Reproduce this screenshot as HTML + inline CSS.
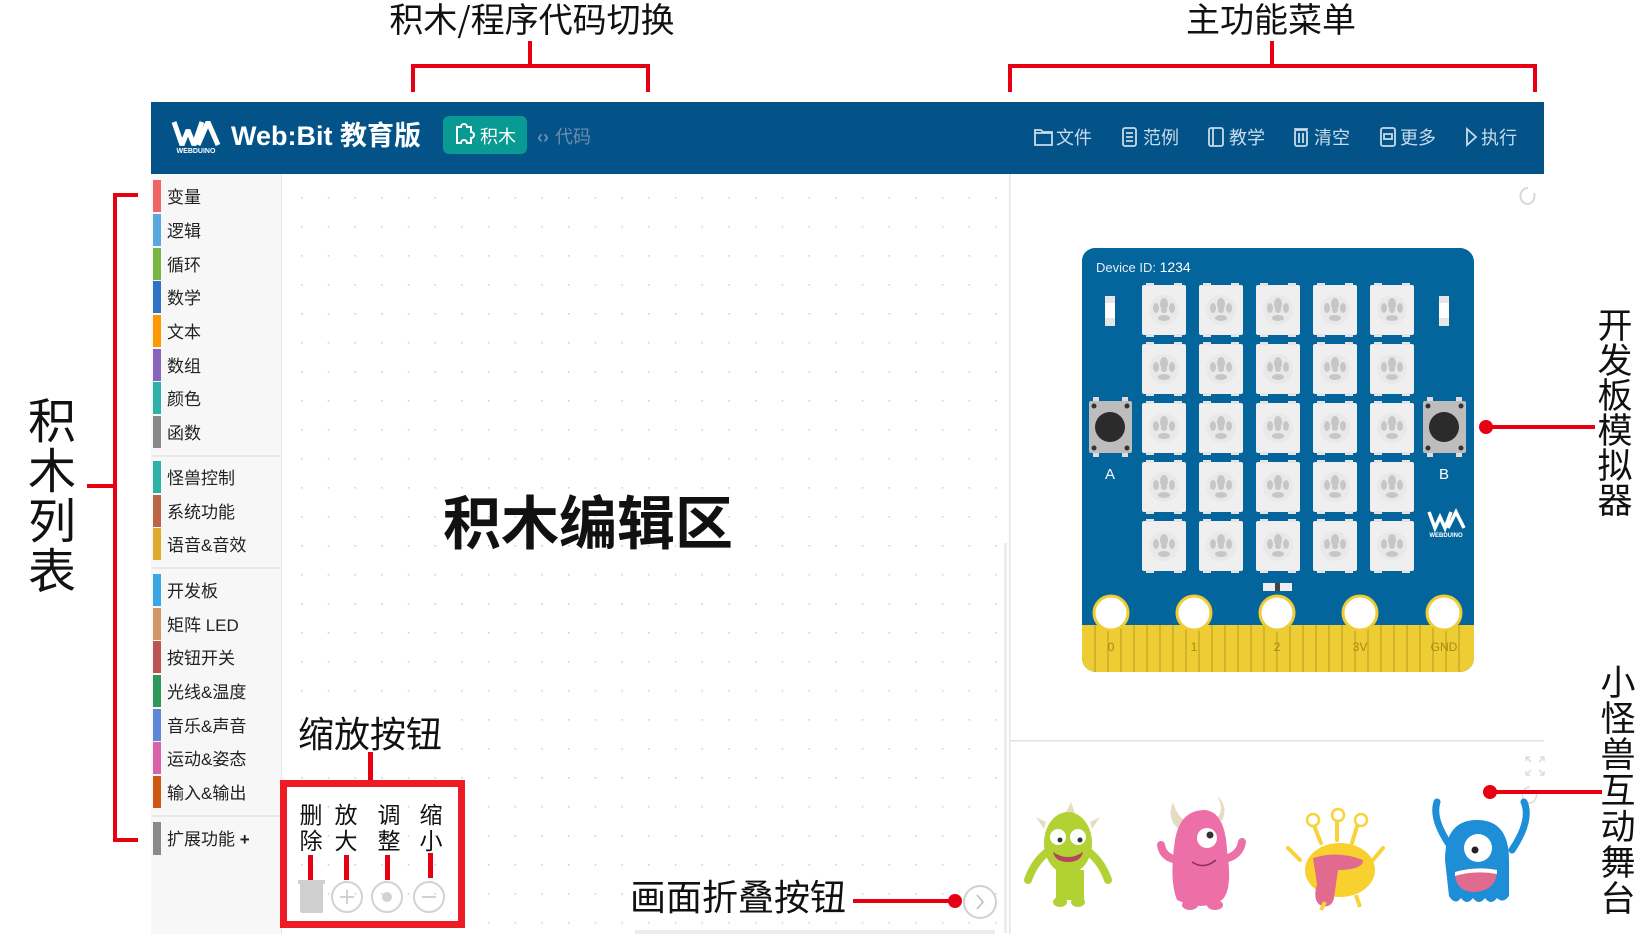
<!DOCTYPE html>
<html><head><meta charset="utf-8">
<style>
html,body{margin:0;padding:0;background:#fff;width:1650px;height:950px;overflow:hidden}
svg{position:absolute;left:0;top:0}
text{font-family:"Liberation Sans","Noto Sans CJK SC",sans-serif}
.an{font-family:"Noto Sans CJK SC","WenQuanYi Zen Hei",sans-serif;fill:#111}
</style></head><body>
<svg width="1650" height="950" viewBox="0 0 1650 950" xmlns="http://www.w3.org/2000/svg">
<defs>
<pattern id="dots" x="301" y="197" width="26.7" height="29" patternUnits="userSpaceOnUse">
<rect x="0" y="0" width="1.6" height="1.6" fill="#d3d3d3"/>
</pattern>
<g id="led">
<rect x="0" y="0" width="44" height="50" rx="2" fill="#efefef"/>
<rect x="4" y="-2" width="8" height="3" fill="#e4e4e4"/><rect x="32" y="-2" width="8" height="3" fill="#e4e4e4"/>
<rect x="4" y="49" width="8" height="3" fill="#e4e4e4"/><rect x="32" y="49" width="8" height="3" fill="#e4e4e4"/>
<circle cx="22" cy="25" r="15" fill="#e9e9e9"/>
<ellipse cx="22" cy="19" rx="4" ry="6" fill="#c6c6c6"/>
<ellipse cx="14" cy="23" rx="3" ry="5" fill="#c6c6c6"/>
<ellipse cx="30" cy="23" rx="3" ry="5" fill="#c6c6c6"/>
<ellipse cx="22" cy="33" rx="6" ry="3" fill="#c6c6c6"/>
<ellipse cx="22" cy="25" rx="3" ry="3" fill="#c6c6c6"/>
</g>
<g id="row"><use href="#led" x="1142" y="0"/><use href="#led" x="1199" y="0"/><use href="#led" x="1256" y="0"/><use href="#led" x="1313" y="0"/><use href="#led" x="1370" y="0"/></g>
</defs>

<!-- annotations top -->
<text class="an" x="532" y="32" font-size="34" text-anchor="middle">积木/程序代码切换</text>
<path d="M530 41 V66 M413 66 H648 M413 64 V92 M648 64 V92" stroke="#e60012" stroke-width="4" fill="none"/>
<text class="an" x="1271" y="32" font-size="34" text-anchor="middle">主功能菜单</text>
<path d="M1272 41 V66 M1010 66 H1535 M1010 64 V92 M1535 64 V92" stroke="#e60012" stroke-width="4" fill="none"/>

<!-- header -->
<rect x="151" y="102" width="1393" height="72" fill="#035389"/>
<path d="M174 122 L182 145 L188 130 L194 145 L202 122 M198 145 L208 122 L218 145" stroke="#fff" stroke-width="5" fill="none" stroke-linejoin="bevel"/>
<text x="196" y="153" font-size="7" fill="#fff" text-anchor="middle" font-weight="bold">WEBDUINO</text>
<text x="231" y="145" font-size="27" font-weight="bold" fill="#fff">Web:Bit 教育版</text>
<rect x="443" y="116" width="84" height="38" rx="6" fill="#0a9a94"/>
<path d="M457 127 h4 a3 3 0 0 1 6 0 h4 v5 a3 3 0 0 1 0 6 v5 h-4 a3 3 0 0 0 -6 0 h-4 z" stroke="#fff" stroke-width="2" fill="none"/>
<text x="480" y="143" font-size="18" fill="#fff">积木</text>
<text x="537" y="143" font-size="18" fill="#6b8cae" font-weight="bold">‹›</text>
<text x="555" y="143" font-size="18" fill="#6b8cae">代码</text>
<g fill="none" stroke="#c8dceb" stroke-width="1.8">
<path d="M1035 130 h6 l2 2 h9 v13 h-17 z M1035 133 h17"/>
<rect x="1123" y="128" width="13" height="18" rx="2"/><path d="M1126 133 h7 M1126 137 h7 M1126 141 h7"/>
<rect x="1209" y="128" width="14" height="18" rx="2"/><path d="M1213 128 v18"/>
<rect x="1295" y="130" width="12" height="16" rx="2"/><path d="M1294 129 h14 M1299 133 v10 M1303 133 v10"/>
<rect x="1381" y="128" width="14" height="18" rx="2"/><path d="M1384 134 h8 v5 h-8 z"/>
<path d="M1467 129 l9 8 l-9 8 z"/>
</g>
<g font-size="18" fill="#c8dceb">
<text x="1056" y="144">文件</text><text x="1143" y="144">范例</text><text x="1229" y="144">教学</text>
<text x="1314" y="144">清空</text><text x="1400" y="144">更多</text><text x="1481" y="144">执行</text>
</g>

<!-- sidebar -->
<rect x="151" y="174" width="130" height="760" fill="#f7f7f7"/>
<rect x="281" y="174" width="1" height="760" fill="#e6e6e6"/>
<g font-size="17" fill="#222">
<rect x="153" y="180" width="8" height="32" fill="#ef6464"/><text x="167" y="203">变量</text>
<rect x="153" y="214" width="8" height="32" fill="#5ba8e0"/><text x="167" y="237">逻辑</text>
<rect x="153" y="248" width="8" height="32" fill="#78b542"/><text x="167" y="271">循环</text>
<rect x="153" y="281" width="8" height="32" fill="#2f74c4"/><text x="167" y="304">数学</text>
<rect x="153" y="315" width="8" height="32" fill="#fe9a00"/><text x="167" y="338">文本</text>
<rect x="153" y="349" width="8" height="32" fill="#8a63bb"/><text x="167" y="372">数组</text>
<rect x="153" y="382" width="8" height="32" fill="#2db2a7"/><text x="167" y="405">颜色</text>
<rect x="153" y="416" width="8" height="32" fill="#888"/><text x="167" y="439">函数</text>
<rect x="151" y="455" width="130" height="2" fill="#e8e8e8"/>
<rect x="153" y="461" width="8" height="32" fill="#2db2a7"/><text x="167" y="484">怪兽控制</text>
<rect x="153" y="495" width="8" height="32" fill="#bb6545"/><text x="167" y="518">系统功能</text>
<rect x="153" y="528" width="8" height="32" fill="#ddaa2c"/><text x="167" y="551">语音&amp;音效</text>
<rect x="151" y="567" width="130" height="2" fill="#e8e8e8"/>
<rect x="153" y="574" width="8" height="32" fill="#3aa6e6"/><text x="167" y="597">开发板</text>
<rect x="153" y="608" width="8" height="32" fill="#d1966a"/><text x="167" y="631">矩阵 LED</text>
<rect x="153" y="641" width="8" height="32" fill="#bd5353"/><text x="167" y="664">按钮开关</text>
<rect x="153" y="675" width="8" height="32" fill="#2f9858"/><text x="167" y="698">光线&amp;温度</text>
<rect x="153" y="709" width="8" height="32" fill="#5f87d8"/><text x="167" y="732">音乐&amp;声音</text>
<rect x="153" y="742" width="8" height="32" fill="#d962a8"/><text x="167" y="765">运动&amp;姿态</text>
<rect x="153" y="776" width="8" height="32" fill="#ce5610"/><text x="167" y="799">输入&amp;输出</text>
<rect x="151" y="815" width="130" height="2" fill="#e8e8e8"/>
<rect x="153" y="822" width="8" height="33" fill="#8a8a8a"/><text x="167" y="845">扩展功能 <tspan font-weight="bold">+</tspan></text>
</g>

<!-- workspace -->
<rect x="282" y="174" width="728" height="760" fill="url(#dots)"/>
<rect x="1009" y="174" width="1.5" height="760" fill="#e4e4e4"/>
<rect x="1004" y="543" width="3" height="390" fill="#ececec"/>
<rect x="635" y="930" width="360" height="4" fill="#ececec"/>
<text class="an" x="588" y="544" font-size="58" text-anchor="middle" font-weight="bold">积木编辑区</text>

<text class="an" x="370" y="747" font-size="36" text-anchor="middle">缩放按钮</text>
<rect x="368" y="752" width="5" height="30" fill="#e60012"/>
<rect x="283.5" y="783.5" width="178" height="141" fill="none" stroke="#ed1c24" stroke-width="7"/>
<g font-size="23" text-anchor="middle">
<text x="311" y="823" class="an">删</text><text x="311" y="849" class="an">除</text>
<text x="346" y="823" class="an">放</text><text x="346" y="849" class="an">大</text>
<text x="389" y="823" class="an">调</text><text x="389" y="849" class="an">整</text>
<text x="431" y="823" class="an">缩</text><text x="431" y="849" class="an">小</text>
</g>
<g fill="#e60012"><rect x="308" y="855" width="5" height="25"/><rect x="344" y="855" width="5" height="25"/><rect x="385" y="855" width="5" height="25"/><rect x="428" y="853" width="5" height="25"/></g>
<rect x="300" y="883" width="23" height="30" rx="2" fill="#cfcfcf"/><rect x="298" y="880" width="27" height="4" fill="#cfcfcf"/>
<g fill="none" stroke="#d2d2d2" stroke-width="2">
<circle cx="347" cy="897" r="15"/><path d="M340 897 h14 M347 890 v14"/>
<circle cx="387" cy="897" r="15"/>
<circle cx="429" cy="897" r="15"/><path d="M422 897 h14"/>
</g>
<circle cx="387" cy="897" r="5" fill="#d2d2d2"/>

<text class="an" x="738" y="910" font-size="36" text-anchor="middle">画面折叠按钮</text>
<rect x="853" y="899" width="102" height="4" fill="#e60012"/>
<circle cx="955" cy="901" r="7" fill="#e60012"/>
<circle cx="980" cy="902" r="16" fill="#fff" stroke="#d0d0d0" stroke-width="2"/>
<path d="M977 895 l6 7 l-6 7" stroke="#bbb" stroke-width="1.5" fill="none"/>

<!-- right panel -->
<path d="M1528 188 a7 8 0 1 0 6 5" stroke="#d8d8d8" stroke-width="2" fill="none"/>
<rect x="1010" y="740" width="534" height="1.5" fill="#e0e0e0"/>
<g stroke="#dcdcdc" stroke-width="1.5" fill="none"><path d="M1526 757 l5 5 M1526 757 v4 M1526 757 h4 M1544 757 l-5 5 M1544 757 v4 M1544 757 h-4 M1526 775 l5 -5 M1526 775 v-4 M1526 775 h4 M1544 775 l-5 -5 M1544 775 v-4 M1544 775 h-4"/>
<path d="M1530 787 a7 8 0 1 0 6 5"/></g>

<!-- board -->
<path d="M1095 248 H1460 a14 14 0 0 1 14 14 V658 a14 14 0 0 1 -14 14 H1096 a14 14 0 0 1 -14 -14 V262 a13 13 0 0 1 13 -14z" fill="#04649c"/>
<path d="M1082 625 H1474 V658 a14 14 0 0 1 -14 14 H1096 a14 14 0 0 1 -14 -14 z" fill="#edcc34"/>
<g stroke="#b99a1a" stroke-width="1">
<path d="M1095 625 v47 M1108 625 v47 M1121 625 v47 M1134 625 v47 M1147 625 v47 M1160 625 v47 M1173 625 v47 M1186 625 v47 M1199 625 v47 M1212 625 v47 M1225 625 v47 M1238 625 v47 M1251 625 v47 M1264 625 v47 M1277 625 v47 M1290 625 v47 M1303 625 v47 M1316 625 v47 M1329 625 v47 M1342 625 v47 M1355 625 v47 M1368 625 v47 M1381 625 v47 M1394 625 v47 M1407 625 v47 M1420 625 v47 M1433 625 v47 M1446 625 v47 M1459 625 v47"/>
</g>
<text x="1096" y="272" font-size="13" fill="#e6eef5">Device ID: <tspan fill="#fff" font-size="14">1234</tspan></text>
<g fill="#fff" stroke="#edcc34" stroke-width="3">
<circle cx="1111" cy="613" r="17"/><circle cx="1194" cy="613" r="17"/><circle cx="1277" cy="613" r="17"/><circle cx="1360" cy="613" r="17"/><circle cx="1444" cy="613" r="17"/>
</g>
<g font-size="12" fill="#a88a10" text-anchor="middle">
<text x="1111" y="651">0</text><text x="1194" y="651">1</text><text x="1277" y="651">2</text><text x="1360" y="651">3V</text><text x="1444" y="651">GND</text>
</g>
<rect x="1105" y="296" width="10" height="30" fill="#e6e6e6"/><rect x="1105" y="303" width="10" height="15" fill="#fff"/>
<rect x="1439" y="296" width="10" height="30" fill="#e6e6e6"/><rect x="1439" y="303" width="10" height="15" fill="#fff"/>
<g id="btnA"><rect x="1089" y="401" width="43" height="52" rx="2" fill="#bdbdbd"/><rect x="1093" y="397" width="6" height="4" fill="#ddd"/><rect x="1122" y="397" width="6" height="4" fill="#ddd"/><rect x="1093" y="453" width="6" height="4" fill="#ddd"/><rect x="1122" y="453" width="6" height="4" fill="#ddd"/><circle cx="1110" cy="427" r="15" fill="#2b2b2b"/><circle cx="1094" cy="406" r="2.5" fill="#333"/><circle cx="1127" cy="406" r="2.5" fill="#333"/><circle cx="1094" cy="448" r="2.5" fill="#333"/><circle cx="1127" cy="448" r="2.5" fill="#333"/></g>
<use href="#btnA" x="334"/>
<text x="1110" y="479" font-size="15" fill="#fff" text-anchor="middle">A</text>
<text x="1444" y="479" font-size="15" fill="#fff" text-anchor="middle">B</text>
<use href="#row" y="285"/><use href="#row" y="344"/><use href="#row" y="403"/><use href="#row" y="462"/><use href="#row" y="521"/>
<rect x="1263" y="583" width="29" height="8" fill="#eee"/><rect x="1275" y="583" width="5" height="8" fill="#444"/>
<path d="M1429 512 L1435 528 L1440 517 L1445 528 L1451 512 M1448 528 L1456 512 L1464 528" stroke="#fff" stroke-width="3.5" fill="none"/>
<text x="1446" y="537" font-size="6" fill="#fff" text-anchor="middle" font-weight="bold">WEBDUINO</text>

<!-- right annotations -->
<rect x="1485" y="425" width="110" height="4" fill="#e60012"/><circle cx="1486" cy="427" r="7" fill="#e60012"/>
<g font-size="35" text-anchor="middle">
<text class="an" x="1615" y="338">开</text><text class="an" x="1615" y="373">发</text><text class="an" x="1615" y="408">板</text><text class="an" x="1615" y="443">模</text><text class="an" x="1615" y="478">拟</text><text class="an" x="1615" y="513">器</text>
<text class="an" x="1618" y="695">小</text><text class="an" x="1618" y="731">怪</text><text class="an" x="1618" y="767">兽</text><text class="an" x="1618" y="803">互</text><text class="an" x="1618" y="839">动</text><text class="an" x="1618" y="875">舞</text><text class="an" x="1618" y="911">台</text>
</g>
<rect x="1490" y="790" width="112" height="4" fill="#e60012"/><circle cx="1490" cy="792" r="7" fill="#e60012"/>
<g font-size="48" text-anchor="middle"><text class="an" x="52" y="438">积</text><text class="an" x="52" y="488">木</text><text class="an" x="52" y="538">列</text><text class="an" x="52" y="588">表</text></g>
<path d="M138 195 H115 V840 H138 M87 486 H115" stroke="#e60012" stroke-width="4" fill="none"/>

<!-- monsters -->
<g>
<path d="M1066 812 l5 -10 l4 11z M1046 822 l-10 -5 l8 12z M1090 822 l10 -5 l-8 12z" fill="#e6dcc2"/>
<ellipse cx="1068" cy="843" rx="24" ry="31" fill="#b2d234"/>
<path d="M1050 850 q-15 10 -22 30 M1086 850 q15 10 22 30" stroke="#b2d234" stroke-width="8" fill="none" stroke-linecap="round"/>
<ellipse cx="1060" cy="902" rx="7" ry="5" fill="#b2d234"/><ellipse cx="1078" cy="902" rx="7" ry="5" fill="#b2d234"/>
<rect x="1056" y="870" width="28" height="30" fill="#b2d234"/>
<circle cx="1058" cy="837" r="8" fill="#fff"/><circle cx="1078" cy="837" r="8" fill="#fff"/>
<circle cx="1060" cy="840" r="2.5" fill="#333"/><circle cx="1080" cy="840" r="2.5" fill="#333"/>
<path d="M1053 852 q15 10 30 0 q-2 10 -15 10 q-13 0 -15 -10z" fill="#b5455c"/>
</g>
<g>
<path d="M1180 830 q-14 -10 -7 -28 q4 14 12 18z M1217 818 q8 -8 0 -22 q12 10 5 25z" fill="#e6dcc2"/>
<path d="M1175 840 q5 -30 30 -30 q20 2 22 40 q6 40 -5 50 q-20 12 -45 0 q-8 -20 -2 -60z" fill="#ec6fa7"/>
<path d="M1178 860 q-15 -2 -17 -15 M1228 858 q12 -4 14 -16" stroke="#ec6fa7" stroke-width="8" fill="none" stroke-linecap="round"/>
<circle cx="1207" cy="838" r="10" fill="#fff"/><circle cx="1210" cy="835" r="3.5" fill="#333"/>
<path d="M1192 862 q12 8 24 -2" stroke="#8a3158" stroke-width="1.5" fill="none"/>
<ellipse cx="1190" cy="905" rx="8" ry="5" fill="#ec6fa7"/><ellipse cx="1215" cy="905" rx="8" ry="5" fill="#ec6fa7"/>
</g>
<g>
<path d="M1321 843 l-8 -20 M1337 840 l0 -22 M1352 843 l6 -20 M1300 860 l-12 -12 M1373 860 l10 -12" stroke="#f7d23a" stroke-width="4" fill="none" stroke-linecap="round"/>
<circle cx="1313" cy="820" r="6" fill="#fff" stroke="#f7d23a" stroke-width="2.5"/><circle cx="1338" cy="815" r="6" fill="#fff" stroke="#f7d23a" stroke-width="2.5"/><circle cx="1361" cy="820" r="6" fill="#fff" stroke="#f7d23a" stroke-width="2.5"/>
<ellipse cx="1340" cy="870" rx="35" ry="27" fill="#f8d12f"/>
<path d="M1313 858 q25 -8 50 2 q0 10 -25 10 l-4 28 q-2 10 -12 8 q-10 -4 -5 -22z" fill="#e06b8e"/>
<path d="M1325 902 l-4 8 M1356 895 l4 12" stroke="#f7d23a" stroke-width="4"/>
</g>
<g>
<path d="M1453 850 q-22 -30 -16 -48 M1512 850 q20 -30 12 -48" stroke="#1e8ed7" stroke-width="7" fill="none" stroke-linecap="round"/>
<path d="M1445 860 q0 -40 32 -40 q32 0 32 40 v36 q-6 8 -12 2 q-6 8 -12 0 q-6 8 -12 0 q-6 8 -12 0 q-6 8 -12 -2z" fill="#1e8ed7"/>
<circle cx="1478" cy="848" r="14" fill="#fff"/><circle cx="1475" cy="850" r="3.5" fill="#222"/>
<path d="M1455 872 q22 -6 42 -2 q0 20 -22 22 q-20 0 -20 -20z" fill="#e06b8e"/>
<path d="M1455 872 q22 -6 42 -2 v4 q-22 -4 -42 2z" fill="#fff"/>
</g>
</svg>
</body></html>
